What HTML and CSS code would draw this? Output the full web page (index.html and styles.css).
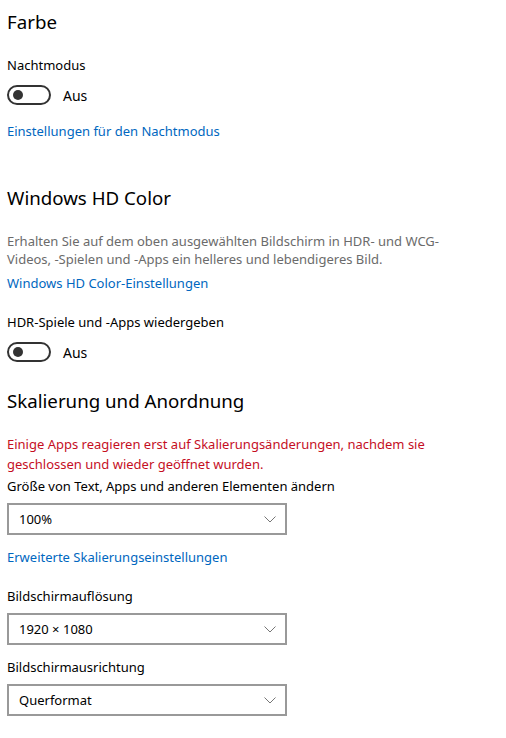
FILE: index.html
```html
<!DOCTYPE html>
<html lang="de">
<head>
    <meta charset="UTF-8">
    <meta name="viewport" content="width=device-width, initial-scale=1.0">
    <title>Anzeige</title>
    <link rel="stylesheet" href="styles.css">
</head>
<body>
    <div class="page">
        <h2 class="section-title first">Farbe</h2>

        <div class="label label-nacht">Nachtmodus</div>
        <div class="toggle-row">
            <span class="toggle"><span class="knob"></span></span>
            <span class="toggle-text">Aus</span>
        </div>
        <a class="link link-nacht" href="#">Einstellungen für den Nachtmodus</a>

        <h2 class="section-title hd-title">Windows HD Color</h2>
        <p class="hint">Erhalten Sie auf dem oben ausgewählten Bildschirm in HDR- und WCG-Videos, -Spielen und -Apps ein helleres und lebendigeres Bild.</p>
        <a class="link link-hd" href="#">Windows HD Color-Einstellungen</a>

        <div class="label label-hdr">HDR-Spiele und -Apps wiedergeben</div>
        <div class="toggle-row">
            <span class="toggle"><span class="knob"></span></span>
            <span class="toggle-text">Aus</span>
        </div>

        <h2 class="section-title scale-title">Skalierung und Anordnung</h2>
        <p class="warning">Einige Apps reagieren erst auf Skalierungsänderungen, nachdem sie geschlossen und wieder geöffnet wurden.</p>

        <div class="label label-size">Größe von Text, Apps und anderen Elementen ändern</div>
        <div class="select">
            <span>100%</span>
            <svg class="chevron" width="12" height="7" viewBox="0 0 12 7"><path d="M0.5 0.5 L6 6 L11.5 0.5" fill="none" stroke="#767676" stroke-width="1"/></svg>
        </div>
        <a class="link link-scale" href="#">Erweiterte Skalierungseinstellungen</a>

        <div class="label label-res">Bildschirmauflösung</div>
        <div class="select">
            <span>1920 × 1080</span>
            <svg class="chevron" width="12" height="7" viewBox="0 0 12 7"><path d="M0.5 0.5 L6 6 L11.5 0.5" fill="none" stroke="#767676" stroke-width="1"/></svg>
        </div>

        <div class="label label-orient">Bildschirmausrichtung</div>
        <div class="select">
            <span>Querformat</span>
            <svg class="chevron" width="12" height="7" viewBox="0 0 12 7"><path d="M0.5 0.5 L6 6 L11.5 0.5" fill="none" stroke="#767676" stroke-width="1"/></svg>
        </div>
    </div>
</body>
</html>
```

FILE: styles.css
```css
body {
    margin: 0;
    background-color: #fff;
    font-family: "Noto Sans", "Open Sans", sans-serif;
    font-size: 13px;
    color: #000;
}
.page {
    padding: 0 7px;
}
.section-title {
    margin: 0;
    font-size: 18.7px;
    font-weight: normal;
    line-height: 28px;
}
.section-title.first {
    margin-top: 8px;
}
.hd-title {
    margin-top: 43px;
}
.scale-title {
    margin-top: 25px;
}
.label {
    line-height: 20px;
    margin-top: 19px;
}
.label-size {
    margin-top: 2px;
}
.label-orient {
    margin-top: 12px;
}
.toggle-row {
    display: flex;
    align-items: center;
    margin-top: 10px;
    height: 20px;
}
.toggle {
    display: flex;
    align-items: center;
    box-sizing: border-box;
    width: 44px;
    height: 20px;
    border: 2px solid #333;
    border-radius: 10px;
    padding-left: 4px;
}
.knob {
    width: 10px;
    height: 10px;
    border-radius: 50%;
    background-color: #333;
}
.toggle-text {
    margin-left: 12px;
    font-size: 14px;
}
.link {
    display: block;
    color: #0067c0;
    text-decoration: none;
    line-height: 20px;
}
.link-nacht {
    margin-top: 16px;
}
.link-hd {
    margin-top: 5px;
}
.link-scale {
    margin-top: 12px;
}
.hint {
    margin: 20px 0 0;
    color: #6b6b6b;
    line-height: 18px;
    max-width: 450px;
}
.warning {
    margin: 19px 0 0;
    color: #c50f1f;
    line-height: 20px;
    max-width: 420px;
}
.select {
    display: flex;
    align-items: center;
    justify-content: space-between;
    box-sizing: border-box;
    width: 280px;
    height: 32px;
    margin-top: 7px;
    padding: 0 9px 0 10px;
    border: 2px solid #999;
}
.chevron {
    display: block;
}
```
